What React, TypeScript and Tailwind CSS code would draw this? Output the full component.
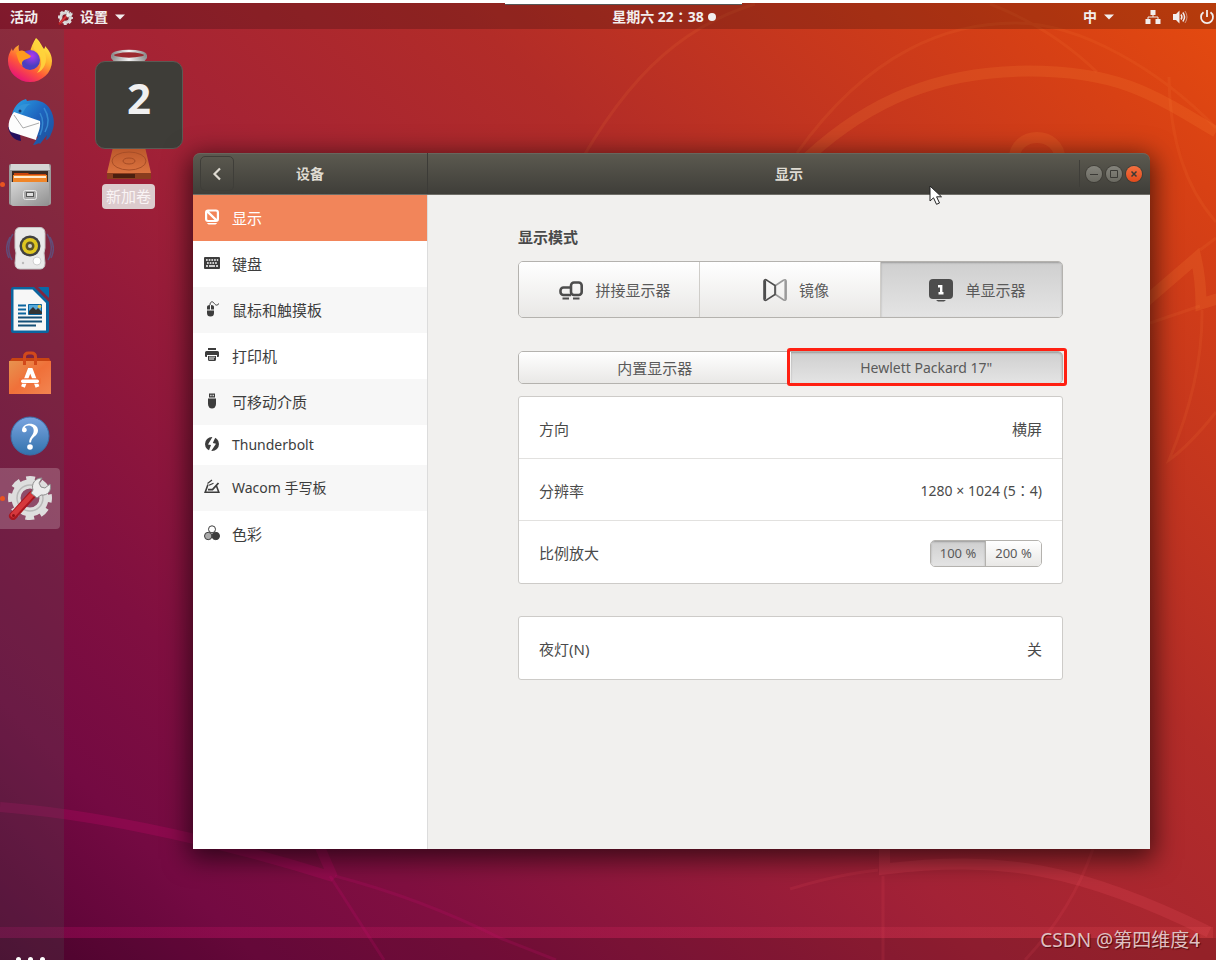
import { useState } from 'react'
import type { ReactNode } from 'react'
import clsx from 'clsx'

const ROWS = [
  { id: 'display', label: '显示', icon: <DisplayIcon /> },
  { id: 'keyboard', label: '键盘', icon: <KeyboardIcon /> },
  { id: 'mouse', label: '鼠标和触摸板', icon: <MouseIcon /> },
  { id: 'printer', label: '打印机', icon: <PrinterIcon /> },
  { id: 'media', label: '可移动介质', icon: <UsbIcon /> },
  { id: 'thunderbolt', label: 'Thunderbolt', icon: <BoltIcon />, latin: true, short: true },
  { id: 'wacom', label: 'Wacom 手写板', icon: <WacomIcon />, latin: true },
  { id: 'color', label: '色彩', icon: <ColorIcon /> },
]

const MODES = [
  { id: 'join', label: '拼接显示器', icon: <JoinIcon /> },
  { id: 'mirror', label: '镜像', icon: <MirrorIcon /> },
  { id: 'single', label: '单显示器', icon: <SingleIcon /> },
]

const DOCK = [
  { id: 'firefox', label: 'Firefox', icon: <FirefoxLogo /> },
  { id: 'thunderbird', label: 'Thunderbird', icon: <ThunderbirdLogo /> },
  { id: 'files', label: 'Files', icon: <FilesLogo />, running: true },
  { id: 'rhythmbox', label: 'Rhythmbox', icon: <RhythmboxLogo /> },
  { id: 'writer', label: 'Writer', icon: <WriterLogo /> },
  { id: 'software', label: 'Software', icon: <SoftwareLogo /> },
  { id: 'help', label: 'Help', icon: <HelpLogo /> },
  { id: 'settings', label: 'Settings', icon: <SettingsLogo />, running: true, active: true },
]

const RAISED = 'bg-linear-to-b from-white to-[#e9e8e6] text-[#5a5a5a]'
const PRESSED = 'bg-linear-to-b from-[#cfcfcf] to-[#e4e4e4] text-[#5a5a5a] shadow-[inset_0_1px_2px_rgba(0,0,0,0.25)]'

/* ---------- 侧边栏图标 ---------- */

function DisplayIcon() {
  return (
    <svg viewBox="0 0 16 16" className="w-4 h-4">
      <path fill="currentColor" fillRule="evenodd" d="M4 0.500h8a3 3 0 0 1 3 3V10a3 3 0 0 1-3 3H4a3 3 0 0 1-3-3V3.500a3 3 0 0 1 3-3zM5 2.500L12.800 10V3.500a1 1 0 0 0-1-1zM3.200 4v6a1 1 0 0 0 1 1h6.300z" />
      <path fill="currentColor" d="M3 14h10c-.6 1-1.500 1.500-2.500 1.500h-5C4.500 15.500 3.600 15 3 14z" />
    </svg>
  )
}

function KeyboardIcon() {
  return (
    <svg viewBox="0 0 16 16" className="w-4 h-4">
      <path fill="currentColor" d="M1 2h14a1 1 0 0 1 1 1v10a1 1 0 0 1-1 1H1a1 1 0 0 1-1-1V3a1 1 0 0 1 1-1z" />
      <path stroke="#fff" strokeWidth="1.600" strokeDasharray="1.700 1" d="M2 5h12.200" />
      <path stroke="#fff" strokeWidth="1.600" strokeDasharray="1.700 1" d="M3 8h10.800" />
      <path stroke="#fff" strokeWidth="1.600" d="M2 11h2M5 11h6M12 11h2" />
    </svg>
  )
}

function MouseIcon() {
  return (
    <svg viewBox="0 0 16 16" className="w-4 h-4">
      <path fill="none" stroke="currentColor" d="M6 4C6 1 8 0 9.500 1.500S12 6 15 2.500" />
      <path fill="currentColor" d="M6 4v4.500H3V6c0-1.200 1-2 3-2zM7 4c2 0 3 .8 3 2v2.500H7zM3 9.500h7V12a3.500 3.500 0 0 1-7 0z" />
    </svg>
  )
}

function PrinterIcon() {
  return (
    <svg viewBox="0 0 16 16" className="w-4 h-4">
      <path fill="currentColor" d="M4 1h8v2H4zM2.500 4h11A1.500 1.500 0 0 1 15 5.500V9a1 1 0 0 1-1 1h-1V8H3v2H2a1 1 0 0 1-1-1V5.500A1.500 1.500 0 0 1 2.500 4z" />
      <path fill="currentColor" fillRule="evenodd" d="M4 9h8v3.500A1.500 1.500 0 0 1 10.500 14h-5A1.500 1.500 0 0 1 4 12.500zM5 9.800v.8h6v-.8zM5 11.600v.8h5v-.8z" />
    </svg>
  )
}

function UsbIcon() {
  return (
    <svg viewBox="0 0 16 16" className="w-4 h-4">
      <path fill="currentColor" fillRule="evenodd" d="M5 0.500h6v4H5zM6.300 1.800v1.400h1.200V1.800zM8.600 1.800v1.400h1.200V1.800z" />
      <path fill="currentColor" d="M4 5.500h8V11a4 4.500 0 0 1-8 0z" />
    </svg>
  )
}

function BoltIcon() {
  return (
    <svg viewBox="0 0 16 16" className="w-4 h-4">
      <circle cx="8" cy="8" r="7" fill="currentColor" />
      <path fill="#fff" d="M9 0L4 8.500l3 .6-2.600 6.900h2.200l5.400-8.300-3.200-.8L12 0z" />
    </svg>
  )
}

function WacomIcon() {
  return (
    <svg viewBox="0 0 16 16" className="w-4 h-4" fill="none" stroke="currentColor" strokeWidth="1.600">
      <path d="M4 5.500L1.200 13.200h13.600L12.500 7" />
      <path d="M4 10.700h4.500L14.500 4" strokeWidth="1.800" />
      <path d="M3.500 4.500l4.500-3.500M5 6.300l4.500-2" strokeWidth="1.200" />
    </svg>
  )
}

function ColorIcon() {
  return (
    <svg viewBox="0 0 16 16" className="w-4 h-4" stroke="currentColor">
      <circle cx="8" cy="4.300" r="3.500" fill="#fff" />
      <circle cx="4.200" cy="11" r="3.700" fill="#aaa" />
      <circle cx="11.800" cy="11" r="3.700" fill="currentColor" />
    </svg>
  )
}

/* ---------- 显示模式图标 ---------- */

function JoinIcon() {
  return (
    <svg viewBox="0 0 24 24" className="w-6 h-6" fill="none" stroke="#4d4d4d" strokeWidth="2.600">
      <path d="M12 9.500H4.500a3 3 0 0 0-3 3v1.500a3 3 0 0 0 3 3H12" />
      <rect x="12" y="4.500" width="10.700" height="12.500" rx="3" />
      <path strokeWidth="1.800" d="M3.500 20.500h6.500M14 20.500h6.500" />
    </svg>
  )
}

function MirrorIcon() {
  return (
    <svg viewBox="0 0 24 24" className="w-6 h-6" fill="none" strokeWidth="1.600" strokeLinejoin="round">
      <path stroke="#9a9a9a" d="M12.500 7.500L20 2.500q3-1.800 3 .8v17.400q0 2.600-3 .8l-7.500-5z" />
      <path stroke="#9a9a9a" strokeWidth="2.200" d="M22.500 2.500v19" />
      <path stroke="#4d4d4d" d="M12 7.500L4 2.300q-2.800-1.600-2.800.8v17.800q0 2.400 2.800.8l8-5.200z" />
      <path stroke="#4d4d4d" strokeWidth="2.600" d="M1.800 2.500v19" />
    </svg>
  )
}

function SingleIcon() {
  return (
    <svg viewBox="0 0 24 24" className="w-6 h-6">
      <rect y="1" width="24" height="20" rx="4" fill="#4d4d4d" />
      <path d="M7 22h10l-2 1.500H9z" fill="#4d4d4d" />
      <path fill="none" stroke="#fff" strokeWidth="2.400" d="M9 8.200h3.200V15.500M9.500 15.300h5" />
    </svg>
  )
}

/* ---------- Dock 图标 ---------- */

function FirefoxLogo() {
  return (
    <svg viewBox="0 0 44 46" className="w-11 h-[46px]">
      <defs>
        <linearGradient id="ff-body" x1="0.850" y1="0.100" x2="0.300" y2="1">
          <stop offset="0" stopColor="#fff24a" />
          <stop offset="0.350" stopColor="#ffb22e" />
          <stop offset="0.650" stopColor="#ff5838" />
          <stop offset="1" stopColor="#e6107a" />
        </linearGradient>
        <radialGradient id="ff-globe" cx="0.600" cy="0.300">
          <stop offset="0" stopColor="#b038f2" />
          <stop offset="1" stopColor="#4a3fc0" />
        </radialGradient>
      </defs>
      <path fill="url(#ff-body)" d="M28 1c4 3 5 7 8 11 1-1 1-2 1-3 5 5 7 10 7 15a22 21 0 0 1-44 0c0-7 3-10 4-13 0 1 0 2 1 3 1-3 4-5 6-6-1 3 0 4 0 6l11 1c1-5 3-9 6-14z" />
      <circle cx="22" cy="23" r="10" fill="url(#ff-globe)" />
      <path fill="#ff9a1f" d="M8 16c4-3 6-3 9-1l6 4c-1 3-6 3-7 4-2 2-3 3-1 6-5-3-5-8-7-13z" />
      <path fill="#ffd43c" opacity="0.900" d="M28 2c4 4 6 8 9 14 3 9-1 17-8 20 6-7 6-17-3-24-1-3 0-7 2-10z" />
    </svg>
  )
}

function ThunderbirdLogo() {
  return (
    <svg viewBox="0 0 48 48" className="w-12 h-12">
      <defs>
        <linearGradient id="tb" x1="0" y1="0" x2="1" y2="1">
          <stop offset="0" stopColor="#2aa6e8" />
          <stop offset="0.500" stopColor="#1e62bd" />
          <stop offset="1" stopColor="#205098" />
        </linearGradient>
      </defs>
      <path fill="#240f5d" d="M2 29c2 9 6 13 13 14l-2-12z" />
      <path fill="url(#tb)" d="M7 13C11 4 17 2 20 1l1 2c9-2 18 0 23 8 5 8 5 18 1 25-1 4-4 6-5 6l1-5-7 9c-1-2-3 1-7 1l5-8L5 20z" />
      <path fill="#fdfdfd" d="M8 14l26 9c1 8-3 13-4 19L5 34c-4-3-3-13 3-20z" />
      <path fill="none" stroke="#aaa" d="M8 17l9 13 16-5" />
      <path fill="#3293d8" d="M8 14c3-6 9-9 17-8-5 1-6 6-9 10-2-2-5-2-8-2z" />
      <circle cx="14" cy="13" r="1.500" fill="#183b72" />
      <path fill="none" stroke="#3488d0" strokeWidth="1.500" d="M38 10c5 8 5 17 1 24M34 15c4 7 3 15 0 22" />
    </svg>
  )
}

function FilesLogo() {
  return (
    <svg viewBox="0 0 44 44" className="w-11 h-11">
      <defs>
        <linearGradient id="cabinet" x1="0" y1="0" x2="1" y2="1">
          <stop offset="0" stopColor="#d6d6d6" />
          <stop offset="1" stopColor="#8f8f8f" />
        </linearGradient>
      </defs>
      <path fill="#9b9b9b" d="M3 1h38a2 2 0 0 1 2 2v37a2 2 0 0 1-2 2H3a2 2 0 0 1-2-2V3a2 2 0 0 1 2-2z" />
      <path fill="#d5d5d5" d="M3 1h38l1 6H2z" />
      <path fill="#3b2a22" d="M4 8h36v12H4z" />
      <path fill="#c9440e" d="M6 10h14l1 1h17v9H6z" />
      <path fill="#f08528" d="M5 12h34v8H5z" />
      <path fill="#ffe9cf" d="M6 13h32v2H6z" />
      <path fill="url(#cabinet)" d="M3 19h38v22a2 2 0 0 1-2 2H5a2 2 0 0 1-2-2z" />
      <rect x="15.500" y="27.500" width="13" height="9" rx="2" fill="#aaa" stroke="#e8e8e8" />
      <rect x="18.500" y="29.500" width="7" height="4" fill="#e0e0e0" stroke="#555" />
    </svg>
  )
}

function RhythmboxLogo() {
  return (
    <svg viewBox="0 0 48 44" className="w-12 h-11">
      <path fill="none" stroke="#4d659c" strokeWidth="1.500" opacity="0.600" d="M7 8C2 15 1 26 6 34M41 8c5 7 6 18 1 26M4 11C0 18 0 26 3 32M44 11c4 7 4 15 1 21" />
      <path fill="#e9e9e9" stroke="#c4c4c4" d="M14 1.500h20q5 0 5 6V22l-1 5 1 10q0 6-5 6H14q-5 0-5-6l1-10-1-5V7.500q0-6 5-6z" />
      <circle cx="24" cy="20" r="10.500" fill="#414141" />
      <circle cx="24" cy="20" r="8" fill="#dfc620" />
      <circle cx="24" cy="20" r="4.500" fill="#5c532a" />
      <circle cx="24" cy="20" r="2" fill="#cfcfcf" />
      <circle cx="31" cy="35" r="4" fill="#fff" stroke="#d0d0d0" />
      <circle cx="17" cy="37" r="1.200" fill="#bbb" />
    </svg>
  )
}

function WriterLogo() {
  return (
    <svg viewBox="0 0 40 48" className="w-10 h-12">
      <path fill="#0b659f" d="M3 1h21l15 15v29a2 2 0 0 1-2 2H3a2 2 0 0 1-2-2V3a2 2 0 0 1 2-2z" />
      <path fill="#f7f7f7" d="M3.500 3.500h19L36 17v27.500H3.500z" />
      <path fill="#0869a8" d="M28 1h10a1 1 0 0 1 1 1v10z" />
      <path stroke="#0b659f" strokeWidth="2" d="M8 19.500h8M8 23.500h8M8 27.500h8" />
      <path stroke="#154f77" strokeWidth="2" d="M8 31.500h24M8 35.500h24M8 39.500h18" />
      <path fill="#55a9da" stroke="#0b659f" d="M18.500 18.500h13v10h-13z" />
      <path fill="#333" d="M19 28v-3l4-4 3 3 2-2 4 4v2z" />
      <circle cx="29.500" cy="20.500" r="1.800" fill="#ecc94b" />
    </svg>
  )
}

function SoftwareLogo() {
  return (
    <svg viewBox="0 0 44 46" className="w-11 h-[46px]">
      <defs>
        <linearGradient id="bag" x1="0" y1="0" x2="1" y2="1">
          <stop offset="0" stopColor="#e7934f" />
          <stop offset="0.500" stopColor="#f07039" />
          <stop offset="1" stopColor="#f28551" />
        </linearGradient>
      </defs>
      <path fill="#c94412" d="M4 8h37l2 4H1z" />
      <path fill="url(#bag)" d="M1 11h42v33H1z" />
      <path fill="none" stroke="#d2491a" strokeWidth="3" d="M16.500 15V7q0-4 4-4h3q4 0 4 4v8" />
      <path fill="none" stroke="#fff" strokeWidth="4" d="M15 37l6.500-17h1.500L29.500 37" />
      <path stroke="#f07039" strokeWidth="5.500" d="M11 31h22" />
      <rect x="13" y="29.500" width="18" height="3.500" rx="1.700" fill="#fff" />
    </svg>
  )
}

function HelpLogo() {
  return (
    <svg viewBox="0 0 40 40" className="w-10 h-10">
      <defs>
        <linearGradient id="help" x1="0" y1="0" x2="0" y2="1">
          <stop offset="0" stopColor="#7aa4e0" />
          <stop offset="1" stopColor="#3272ac" />
        </linearGradient>
      </defs>
      <circle cx="20" cy="20" r="19" fill="url(#help)" stroke="#3a6ea8" />
      <path fill="#fff" d="M12 14.500c0-9 16-9 16 0 0 5.500-6.500 6-7 12h-1.800c0-6 4.500-7 4.500-12 0-6-8-6-9-3 2.500 0 3 4.800 0 4.800-1.700 0-2.700-.8-2.700-1.800z" />
      <circle cx="20" cy="31" r="2.800" fill="#fff" />
    </svg>
  )
}

function SettingsLogo({ className = 'w-11 h-11' }: { className?: string }) {
  return (
    <svg viewBox="0 0 44 44" className={className}>
      <circle cx="22" cy="22" r="14" fill="none" stroke="#dedede" strokeWidth="9" />
      <circle cx="22" cy="22" r="19" fill="none" stroke="#dedede" strokeWidth="6" strokeDasharray="8.500 6.422" strokeDashoffset="4.250" />
      <circle cx="22" cy="22" r="13" fill="none" stroke="#b9b9b9" strokeWidth="1.500" />
      <path stroke="#a91720" strokeWidth="8" strokeLinecap="round" d="M5 40L24 19" />
      <path stroke="#d6383c" strokeWidth="5" strokeLinecap="round" d="M5 39L24 18.500" />
      <path fill="#ececec" stroke="#8d8d8d" d="M25 14c-2-6 2-12 9-12l-3 5 2 4 4 1 5-4c2 6-2 12-9 11l-4 3-6-5z" />
      <circle cx="5.500" cy="39.500" r="1.500" fill="#8c1218" />
    </svg>
  )
}

/* ---------- 桌面 ---------- */

function Wallpaper() {
  return (
    <div className="absolute inset-0 bg-[linear-gradient(45deg,#560334_0%,#740a42_12%,#800f40_22%,#a32236_46%,#b22c28_65%,#d84114_91%,#e54b0f_100%)]">
      <svg viewBox="0 0 1216 960" preserveAspectRatio="xMidYMid slice" className="w-full h-full" fill="none">
        <defs>
          <linearGradient id="band" gradientUnits="userSpaceOnUse" x1="0" y1="0" x2="1216" y2="0">
            <stop offset="0" stopColor="#c8086c" stopOpacity="0.250" />
            <stop offset="0.500" stopColor="#d8205c" stopOpacity="0.250" />
            <stop offset="1" stopColor="#e85050" stopOpacity="0.220" />
          </linearGradient>
        </defs>
        <path fill="#000" fillOpacity="0.130" d="M0 938h1216v22H0z" />
        <path fill="url(#band)" d="M0 927h1213v11H0z" />
        <g stroke="#c8086c" strokeOpacity="0.260" strokeLinejoin="bevel">
          <path strokeWidth="10" d="M0 807C80 813 200 835 333 877L319 845" />
          <path strokeWidth="3" strokeOpacity="0.200" d="M330 876L384 960M335 876C400 893 460 918 500 938L556 960" />
        </g>
        <g stroke="#f05060" strokeOpacity="0.200">
          <path strokeWidth="11" d="M884.500 840v29C1000 855 1080 868 1209 932" />
          <path strokeWidth="3" strokeOpacity="0.130" d="M883 876v84M1093 849Q1072 910 1025 960M790 889Q840 874 878 870" />
        </g>
        <g stroke="#ff8c3c" strokeOpacity="0.170">
          <path strokeWidth="11" d="M808 157C870 100 940 71 1028 71S1150 92 1216 132M1014 160c0-30 46-30 46 0M1145 302L1196 258Q1201 280 1201 304L1220 298" />
          <path strokeWidth="3" strokeOpacity="0.110" d="M560 200C620 80 680 27 755 4M990 4Q1050 27 1097 72M797 153C870 50 950 23 1015 23S1160 70 1216 128M1169 77Q1170 170 1216 222M1150 323l50-17M1202 310Q1203 380 1169 460Q1190 445 1216 412M1200 250l16-12" />
        </g>
      </svg>
    </div>
  )
}

function TopBar() {
  return (
    <header className="relative border-t-3 border-white">
      <div className="absolute left-[505px] -top-[3px] w-[237px] h-[5px] bg-white border-b border-[#555]" />
      <div className="grid grid-cols-[1fr_auto_1fr] items-center h-[26px] pt-[2px] bg-black/20 text-[14px] leading-5 font-bold text-[#f2eeee]">
        <div className="flex items-center pl-[10px] gap-5">
          <button>活动</button>
          <button className="flex items-center gap-[7px]">
            <SettingsLogo className="w-[15px] h-[15px]" />
            设置
            <Caret />
          </button>
        </div>
        <button className="flex items-center gap-1 pl-28">
          <span className="font-['Noto_Sans','Noto_Sans_CJK_TC',sans-serif]">星期六 22：38</span>
          <span className="w-2 h-2 rounded-full bg-[#f2eeee]" />
        </button>
        <div className="flex items-center justify-end gap-[9px]">
          <button className="flex items-center gap-[7px] mr-[22px]">
            中 <Caret />
          </button>
          <button aria-label="网络">
            <svg viewBox="0 0 16 16" className="w-4 h-4">
              <path fill="currentColor" d="M5.500 1h5v5h-5zM0.500 10h5v5h-5zM10.500 10h5v5h-5z" />
              <path fill="none" stroke="currentColor" d="M8 6v2M3 10.500V8h10v2.500" />
            </svg>
          </button>
          <button aria-label="音量" className="ml-[2px]">
            <svg viewBox="0 0 16 16" className="w-4 h-4">
              <path fill="currentColor" d="M1 5h3l3.500-3.500v13L4 11H1z" />
              <path fill="none" stroke="currentColor" strokeWidth="1.500" d="M9 5.500q1.800 2.500 0 5M10.800 3.500q3.500 4.500 0 9" />
              <path fill="none" stroke="currentColor" strokeOpacity="0.500" d="M13 2q4 6 0 12" />
            </svg>
          </button>
          <button aria-label="电源" className="ml-[2px] mr-px">
            <svg viewBox="0 0 16 16" className="w-4 h-4" fill="none" stroke="currentColor" strokeWidth="1.800">
              <path d="M8 1v7M4.500 3.200a6 6 0 1 0 7 0" />
            </svg>
          </button>
        </div>
      </div>
    </header>
  )
}

function Caret() {
  return (
    <svg viewBox="0 0 10 6" className="w-[10px] h-[6px]">
      <path fill="currentColor" d="M0 .500h10L5 5.500z" />
    </svg>
  )
}

function Dock() {
  return (
    <aside className="w-16 flex flex-col justify-between bg-[#505050]/25">
      <nav className="h-[500px] flex flex-col justify-between">
        {DOCK.map((app) => (
          <button
            key={app.id}
            aria-label={app.label}
            className={clsx('relative w-[60px] h-[61px] flex items-center justify-center rounded-r-[4px]', app.active && 'bg-white/20')}
          >
            {app.icon}
            {app.running && <span className="absolute left-0 w-[5px] h-[5px] rounded-full bg-[#e95420]" />}
          </button>
        ))}
      </nav>
      <button aria-label="显示应用程序" className="h-[3px] pl-4 flex gap-[7px] overflow-hidden">
        <span className="w-[5px] h-[5px] shrink-0 rounded-full bg-white" />
        <span className="w-[5px] h-[5px] shrink-0 rounded-full bg-white" />
        <span className="w-[5px] h-[5px] shrink-0 rounded-full bg-white" />
      </button>
    </aside>
  )
}

function DesktopVolume() {
  return (
    <div className="relative w-[129px] shrink-0 flex flex-col items-center pt-5">
      <svg viewBox="0 0 48 132" className="w-12 h-[132px]">
        <defs>
          <linearGradient id="ring" x1="0" x2="1" y1="0" y2="0">
            <stop offset="0" stopColor="#8d8d8d" />
            <stop offset="0.500" stopColor="#f4f4f4" />
            <stop offset="1" stopColor="#8d8d8d" />
          </linearGradient>
          <linearGradient id="disk" x1="0" x2="0" y1="0" y2="1">
            <stop offset="0" stopColor="#b9562a" />
            <stop offset="1" stopColor="#dc7440" />
          </linearGradient>
        </defs>
        <path fill="url(#ring)" d="M6 6h36v3l-4 5H10L6 9z" />
        <ellipse cx="24" cy="6" rx="16.500" ry="4" fill="#9c2a30" stroke="url(#ring)" strokeWidth="2.500" />
        <path fill="url(#disk)" d="M8 98h32l6 26H2z" />
        <ellipse cx="24" cy="112" rx="17" ry="9" fill="none" stroke="#a84e27" />
        <ellipse cx="24" cy="112" rx="6" ry="3" fill="none" stroke="#a44b25" />
        <path fill="#8a3d1e" d="M2 124h44v6H2z" />
        <path fill="#4b1f0f" d="M8 125h22v4H8z" />
      </svg>
      <div className="mt-[3px] px-1 rounded-[4px] bg-[#dccbcd] text-[15px] leading-[25px] text-[#f9f4f5]">新加卷</div>
      {/* 显示器编号浮层 */}
      <div className="absolute left-[31px] top-[32px] w-[88px] h-[88px] rounded-[10px] border border-[#5b5a54] bg-[#3e3d38] flex justify-center pt-2 text-[42px] leading-[56px] font-bold text-[#f0f0f0]">
        2
      </div>
    </div>
  )
}

function WindowButton({ label, close, children }: { label: string; close?: boolean; children: ReactNode }) {
  return (
    <button
      aria-label={label}
      className={clsx(
        'w-4 h-4 rounded-full flex items-center justify-center text-[#3b3a36] ring-1 ring-[#35342f]/60',
        close ? 'bg-linear-to-b from-[#f4703f] to-[#e24a1a]' : 'bg-linear-to-b from-[#85847c] to-[#6b6a62]',
      )}
    >
      <svg viewBox="0 0 16 16" className="w-4 h-4" fill="none" stroke="currentColor">
        {children}
      </svg>
    </button>
  )
}

function TitleBar() {
  return (
    <div className="flex h-[42px] rounded-t-[7px] bg-linear-to-b from-[#5c5a50] to-[#3f3e39] border-b border-[#6f6e68] text-[14px] leading-5 font-bold text-[#dfdbd2] shadow-[inset_0_1px_0_rgba(255,255,255,0.08)]">
      <div className="relative w-[235px] flex items-center justify-center border-r border-[#3c3b37]">
        <button aria-label="返回" className="absolute left-[7px] w-[34px] h-[35px] flex items-center justify-center rounded-[5px] border border-[#3f3e39]">
          <svg viewBox="0 0 16 16" className="w-4 h-4" fill="none" stroke="currentColor" strokeWidth="2.200">
            <path d="M11 2.500L5.500 8l5.500 5.500" />
          </svg>
        </button>
        <span>设备</span>
      </div>
      <div className="relative flex-1 flex items-center justify-center">
        <span>显示</span>
        <div className="absolute right-2 flex items-center gap-1 h-[27px] pl-[6px] border-l border-[#3f3e39]">
          <WindowButton label="最小化">
            <path d="M4 8.500h8" />
          </WindowButton>
          <WindowButton label="最大化">
            <path d="M4.500 4.500h7v7h-7z" />
          </WindowButton>
          <WindowButton label="关闭" close>
            <path strokeWidth="1.500" d="M5.500 5.500l5 5M10.500 5.500l-5 5" />
          </WindowButton>
        </div>
      </div>
    </div>
  )
}

function Sidebar() {
  const [current, setCurrent] = useState('display')
  return (
    <nav className="w-[235px] bg-white border-r border-[#dcdcdc] flex flex-col">
      {ROWS.map((row, i) => (
        <button
          key={row.id}
          onClick={() => setCurrent(row.id)}
          className={clsx(
            'flex items-center gap-3 pl-[11px] leading-5',
            row.short ? 'h-10' : 'h-[46px]',
            row.latin ? 'text-[14px]' : 'text-[15px]',
            row.id === current ? 'bg-[#f2855a] text-white' : 'text-[#3d3d3d]',
            row.id !== current && i % 2 === 0 && 'bg-[#f7f7f7]',
          )}
        >
          <span className="pb-[2px]">{row.icon}</span>
          <span>{row.label}</span>
        </button>
      ))}
    </nav>
  )
}

function Row({ label, children }: { label: string; children: ReactNode }) {
  return (
    <div className="flex items-center justify-between h-[62px] px-5 pt-[2px] text-[#4a4a4a]">
      <span className="text-[15px] leading-5">{label}</span>
      {children}
    </div>
  )
}

function DisplayPanel() {
  const [mode, setMode] = useState('single')
  const [screen, setScreen] = useState('hp')
  const [scale, setScale] = useState('100 %')

  return (
    <main className="flex-1 bg-[#f1f0ee] pl-[90px] pr-[87px] pt-8">
      <h2 className="text-[15px] leading-5 font-bold text-[#4a4a4a]">显示模式</h2>

      <div className="mt-[14px] grid grid-cols-3 h-[57px] rounded-[5px] border border-[#b4b2ae] overflow-hidden divide-x divide-[#cfcdc9]">
        {MODES.map((m) => (
          <button
            key={m.id}
            aria-pressed={mode === m.id}
            onClick={() => setMode(m.id)}
            className={clsx('flex items-center justify-center gap-3 pl-3 text-[15px] leading-5', mode === m.id ? PRESSED : RAISED)}
          >
            {m.icon}
            {m.label}
          </button>
        ))}
      </div>

      <div className="mt-[33px] relative grid grid-cols-2 h-[33px] rounded-[5px] border border-[#b4b2ae]">
        <button
          aria-pressed={screen === 'builtin'}
          onClick={() => setScreen('builtin')}
          className={clsx('rounded-l-[4px] text-[15px] leading-5', screen === 'builtin' ? PRESSED : RAISED)}
        >
          内置显示器
        </button>
        <button
          aria-pressed={screen === 'hp'}
          onClick={() => setScreen('hp')}
          className={clsx('rounded-r-[4px] text-[14px] leading-5', screen === 'hp' ? PRESSED : RAISED)}
        >
          Hewlett Packard 17"
        </button>
        {/* 红框标注 */}
        <div className="absolute left-[calc(50%-4px)] -right-[5px] -top-1 -bottom-[3px] rounded-[3px] border-3 border-[#ff2012] pointer-events-none" />
      </div>

      <div className="mt-3 bg-white rounded-[3px] border border-[#cdcbc8] divide-y divide-[#e2e1df]">
        <Row label="方向">
          <span className="text-[15px] leading-5">横屏</span>
        </Row>
        <Row label="分辨率">
          <span className="text-[14px] leading-5 font-['Noto_Sans','Noto_Sans_CJK_TC',sans-serif]">1280 × 1024 (5：4)</span>
        </Row>
        <Row label="比例放大">
          <div className="flex h-[27px] rounded-[5px] border border-[#b4b2ae] overflow-hidden divide-x divide-[#b4b2ae] text-[13px] leading-5">
            {['100 %', '200 %'].map((value) => (
              <button
                key={value}
                aria-pressed={scale === value}
                onClick={() => setScale(value)}
                className={clsx('w-[55px]', scale === value ? PRESSED : RAISED)}
              >
                {value}
              </button>
            ))}
          </div>
        </Row>
      </div>

      <div className="mt-8 bg-white rounded-[3px] border border-[#cdcbc8]">
        <Row label="夜灯(N)">
          <span className="text-[15px] leading-5">关</span>
        </Row>
      </div>
    </main>
  )
}

export default function App() {
  return (
    <div className="relative min-h-screen flex flex-col overflow-hidden font-['Noto_Sans','Noto_Sans_CJK_SC',sans-serif]">
      <Wallpaper />
      <TopBar />
      <div className="relative flex-1 flex">
        <Dock />
        <DesktopVolume />
        <section className="relative flex-1 flex flex-col mt-[124px] mr-[66px] mb-[111px] rounded-t-[7px] shadow-[0_6px_26px_4px_rgba(0,0,0,0.6)]">
          <TitleBar />
          <div className="flex-1 flex">
            <Sidebar />
            <DisplayPanel />
          </div>
          <svg viewBox="0 0 14 21" className="absolute left-[736px] top-[32px] w-[14px] h-[21px]">
            <path fill="#fff" stroke="#222" d="M1 1v15l3.500-3.200 3 6.500 3-1.300-2.900-6.200H12.500z" />
          </svg>
        </section>
        <p className="absolute right-4 bottom-[6px] text-[19px] leading-7 text-[#e0c0c2] [text-shadow:1px_1px_1px_rgba(60,0,0,0.8)]">CSDN @第四维度4</p>
      </div>
    </div>
  )
}
